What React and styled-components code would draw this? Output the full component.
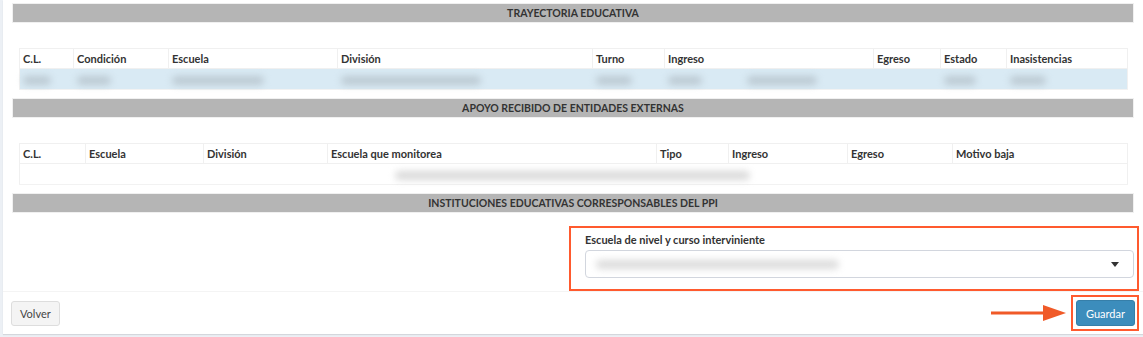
import React from 'react'
import styled, { createGlobalStyle } from 'styled-components'

const GlobalStyle = createGlobalStyle`
	body {
		margin: 0;
		background: #ecf0f5;
		font-family: Lato, "Open Sans", sans-serif;
		color: #333;
	}
`

const Page = styled.div`
	padding: 0 0 5px 3px;
`

const Box = styled.div`
	background: #fff;
	box-shadow: 0 1px 1px rgba(0, 0, 0, 0.1);
`

const BoxBody = styled.div`
	padding: 3px 9px 0 9px;
`

const SectionBar = styled.div`
	height: 18px;
	border: 1px solid #f0f0f0;
	background: #b5b5b5;
	display: flex;
	align-items: center;
	justify-content: center;
	font-size: 10.5px;
	font-weight: 700;
	color: #333;
	text-transform: uppercase;
	margin-top: ${props => props.top || 0}px;
`

const Table = styled.table`
	margin: 25px 7px 0;
	width: calc(100% - 14px);
	table-layout: fixed;
	border-collapse: collapse;
	font-size: 11px;
`

const Th = styled.th`
	height: 19px;
	padding: 0 3px;
	border: 1px solid #f0f0f0;
	text-align: left;
	font-weight: 700;
	color: #333;
	white-space: nowrap;
`

const Td = styled.td`
	height: 20px;
	padding: 0 3px;
	border-top: 1px solid #f2f2f2;
	border-bottom: 1px solid #f2f2f2;
	background: ${props => (props.tinted ? '#d9eaf4' : '#fff')};
	overflow: visible;
	white-space: nowrap;

	&:first-child {
		border-left: 1px solid #f0f0f0;
	}

	&:last-child {
		border-right: 1px solid #f0f0f0;
	}
`

const Blur = styled.span`
	display: inline-block;
	vertical-align: middle;
	width: ${props => props.w}px;
	height: 9px;
	margin-left: ${props => props.ml || 0}px;
	background: ${props => props.color || '#bccad3'};
	filter: blur(3.5px);
	border-radius: 5px;
`

const FormRow = styled.div`
	display: flex;
	justify-content: flex-end;
	margin: 13px -5px 0 0;
`

const Highlight = styled.div`
	width: 570px;
	box-sizing: border-box;
	border: 2px solid #ff5a2e;
	padding: 5px 3px 11px 14px;
`

const Label = styled.label`
	display: block;
	font-size: 11px;
	font-weight: 700;
	line-height: 14px;
	margin-bottom: 3px;
`

const Select = styled.div`
	height: 28px;
	box-sizing: border-box;
	border: 1px solid #d2d6de;
	border-radius: 4px;
	display: flex;
	align-items: center;
	justify-content: space-between;
	padding: 0 14px 0 10px;
`

const Caret = styled.span`
	width: 0;
	height: 0;
	border-left: 4px solid transparent;
	border-right: 4px solid transparent;
	border-top: 5px solid #333;
`

const Footer = styled.div`
	display: flex;
	align-items: center;
	border-top: 1px solid #f4f4f4;
	padding: 3px 4px 3px 8px;
`

const Button = styled.button`
	height: ${props => (props.primary ? 26 : 25)}px;
	padding: 0 ${props => (props.primary ? 9 : 8)}px;
	font-family: Lato, "Open Sans", sans-serif;
	font-size: 11px;
	border-radius: 3px;
	border: 1px solid ${props => (props.primary ? '#367fa9' : '#ddd')};
	background: ${props => (props.primary ? '#3c8dbc' : '#f4f4f4')};
	color: ${props => (props.primary ? '#fff' : '#444')};
	cursor: pointer;
`

const Arrow = styled.svg`
	margin-left: auto;
	margin-right: 5px;
	display: block;
`

const ButtonMark = styled.div`
	border: 2px solid #ff5a2e;
	padding: 3px 2px 3px 3px;
	display: flex;
`

const trayectoriaCols = [
	{ label: 'C.L.', width: 54, blur: [28] },
	{ label: 'Condición', width: 95, blur: [34] },
	{ label: 'Escuela', width: 169, blur: [92] },
	{ label: 'División', width: 255, blur: [140] },
	{ label: 'Turno', width: 72, blur: [36] },
	{ label: 'Ingreso', width: 209, blur: [34, 70], gap: 45 },
	{ label: 'Egreso', width: 67, blur: [] },
	{ label: 'Estado', width: 66, blur: [32] },
	{ label: 'Inasistencias', width: 121, blur: [36] },
]

const apoyoCols = [
	{ label: 'C.L.', width: 66 },
	{ label: 'Escuela', width: 118 },
	{ label: 'División', width: 124 },
	{ label: 'Escuela que monitorea', width: 329 },
	{ label: 'Tipo', width: 72 },
	{ label: 'Ingreso', width: 119 },
	{ label: 'Egreso', width: 105 },
	{ label: 'Motivo baja', width: 175 },
]

const DataTable = ({ cols, children }) => (
	<Table>
		<colgroup>
			{cols.map(col => <col key={col.label} style={{ width: col.width }} />)}
		</colgroup>
		<thead>
			<tr>
				{cols.map(col => <Th key={col.label}>{col.label}</Th>)}
			</tr>
		</thead>
		<tbody>{children}</tbody>
	</Table>
)

const App = () => (
	<Page>
		<GlobalStyle />
		<Box>
			<BoxBody>
				<SectionBar>Trayectoria educativa</SectionBar>
				<DataTable cols={trayectoriaCols}>
					<tr>
						{trayectoriaCols.map(col => (
							<Td key={col.label} tinted>
								{col.blur.map((w, i) => (
									<Blur key={w} w={w} ml={i > 0 ? col.gap : 0} />
								))}
							</Td>
						))}
					</tr>
				</DataTable>

				<SectionBar top={8}>Apoyo recibido de entidades externas</SectionBar>
				<DataTable cols={apoyoCols}>
					<tr>
						{apoyoCols.map(col => (
							<Td key={col.label}>
								{col.label === 'Escuela que monitorea' && (
									<Blur w={355} ml={64} color="#dadada" />
								)}
							</Td>
						))}
					</tr>
				</DataTable>

				<SectionBar top={8}>Instituciones educativas corresponsables del PPI</SectionBar>
				<FormRow>
					<Highlight>
						<Label>Escuela de nivel y curso interviniente</Label>
						<Select>
							<Blur w={243} color="#dcdcdc" />
							<Caret />
						</Select>
					</Highlight>
				</FormRow>
			</BoxBody>
			<Footer>
				<Button>Volver</Button>
				<Arrow width="75" height="18" viewBox="0 0 75 18">
					<line x1="0" y1="9" x2="54" y2="9" stroke="#f05a28" strokeWidth="3" />
					<polygon points="52,1 75,9 52,17" fill="#f05a28" />
				</Arrow>
				<ButtonMark>
					<Button primary>Guardar</Button>
				</ButtonMark>
			</Footer>
		</Box>
	</Page>
)

export default App
